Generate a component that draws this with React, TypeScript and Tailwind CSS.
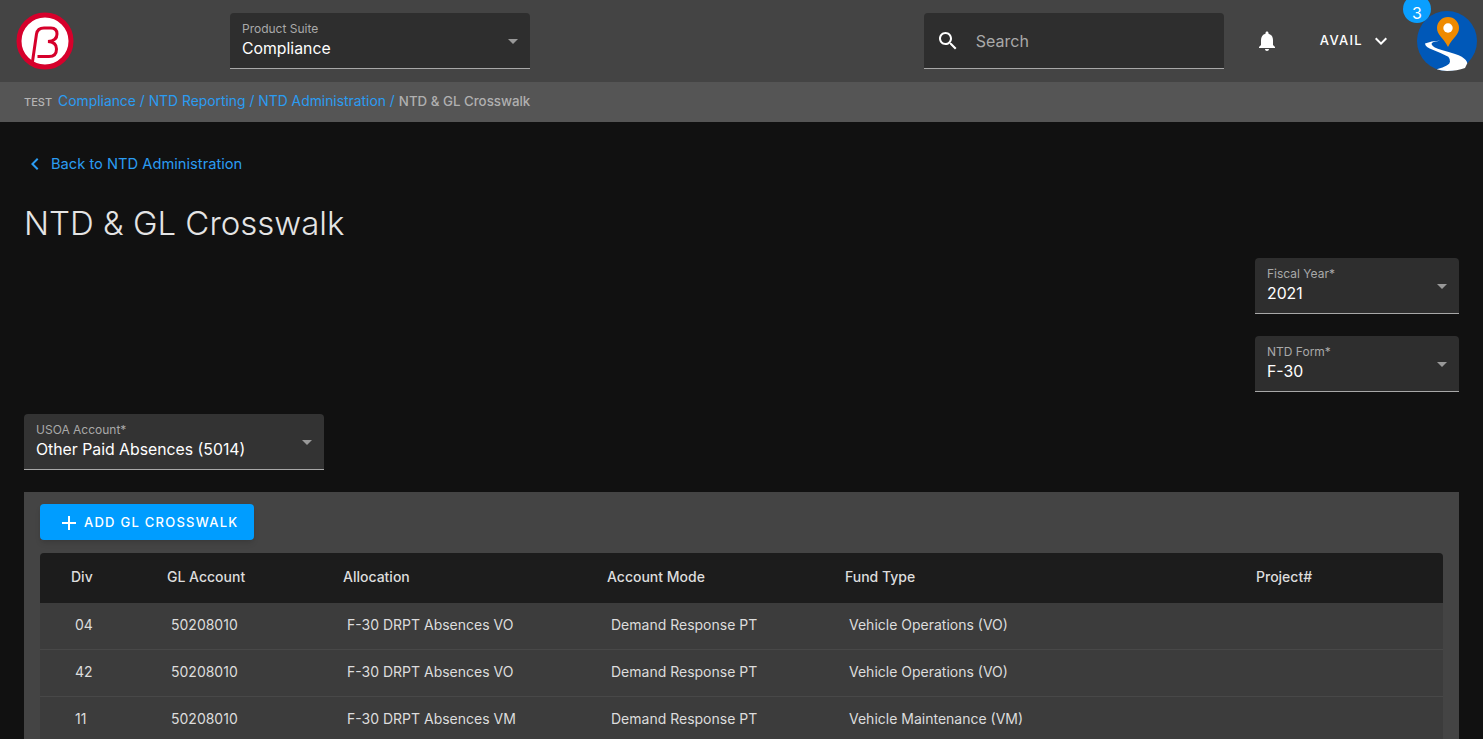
import React from 'react';

const ICON = {
  search: 'M15.5 14h-.79l-.28-.27C15.41 12.59 16 11.11 16 9.5 16 5.91 13.09 3 9.5 3S3 5.91 3 9.5 5.91 16 9.5 16c1.61 0 3.09-.59 4.23-1.57l.27.28v.79l5 4.99L20.49 19l-4.99-5zm-6 0C7.01 14 5 11.99 5 9.5S7.01 5 9.5 5 14 7.01 14 9.5 11.99 14 9.5 14z',
  bell: 'M12 22c1.1 0 2-.9 2-2h-4c0 1.1.89 2 2 2zm6-6v-5c0-3.07-1.64-5.64-4.5-6.32V4c0-.83-.67-1.5-1.5-1.5s-1.5.67-1.5 1.5v.68C7.63 5.36 6 7.92 6 11v5l-2 2v1h16v-1l-2-2z',
  chevronDown: 'M7.41 8.59L12 13.17l4.59-4.58L18 10l-6 6-6-6 1.41-1.41z',
  chevronLeft: 'M15.41 7.41L14 6l-6 6 6 6 1.41-1.41L10.83 12z',
  plus: 'M19 13h-6v6h-2v-6H5v-2h6V5h2v6h6v2z',
  caret: 'M7 10l5 5 5-5z',
};

function Icon({ d, className }: { d: string; className: string }) {
  return (
    <svg viewBox="0 0 24 24" className={className} fill="currentColor">
      <path d={d} />
    </svg>
  );
}

function Logo() {
  return (
    <svg viewBox="0 0 58 58" className="w-[58px] h-[58px]">
      <circle cx="29" cy="29" r="26" fill="#fff" stroke="#d6002b" strokeWidth="5" />
      <path
        d="M16 53 L20.5 22 Q21.5 16 28 16 L35 16 Q41 16 41 22 Q41 29 32 29.5 Q40.5 30 40.5 37 Q40.5 44.5 33 44.5 L21.5 44.5"
        fill="none"
        stroke="#d6002b"
        strokeWidth="3"
      />
    </svg>
  );
}

function Avatar() {
  return (
    <div className="relative w-[60px] h-[60px]">
      <svg viewBox="0 0 60 60" className="w-[60px] h-[60px]">
        <circle cx="30" cy="30" r="30" fill="#0058b8" />
        <path
          d="M8 32.5 Q15 29.5 23 29.7 Q13 31 14.7 33.5 Q16 36.5 24.7 39 Q40 43 44.7 45.7 Q50 49 50.3 52.3 L48 57 Q40 60 30 60 Q25 60 19.7 58.3 Q33 54.5 33 50.7 Q33 47.5 31.3 45.7 Q24 42 16.3 39 Q8 36 8 32.5 Z"
          fill="#fff"
        />
        <path d="M31 36 C26 26 20 24 20 17 A11 11 0 0 1 42 17 C42 24 36 26 31 36 Z" fill="#ee8a00" />
        <circle cx="31" cy="17" r="4.7" fill="#fff" />
      </svg>
      <span className="absolute -top-[16px] -left-[14px] w-[28px] h-[28px] pt-[8px] rounded-full bg-[#0a9fff] text-white text-[16px] flex items-center justify-center">
        3
      </span>
    </div>
  );
}

function Select({ label, value, className }: { label: string; value: string; className: string }) {
  return (
    <div className={`h-[56px] pl-3 pr-[5px] pt-[8px] rounded-t border-b border-[#a8a8a8] flex justify-between ${className}`}>
      <div>
        <div className="text-[12px] leading-[15px] text-[#a9a9a9]">{label}</div>
        <div className="mt-[1px] text-[15.8px] leading-[24px] text-white">{value}</div>
      </div>
      <Icon d={ICON.caret} className="w-6 h-6 mt-[8px] text-[#999999]" />
    </div>
  );
}

const COLS = 'grid grid-cols-[96px_176px_264px_238px_411px_1fr]';

const HEADERS = ['Div', 'GL Account', 'Allocation', 'Account Mode', 'Fund Type', 'Project#'];

const ROWS = [
  ['04', '50208010', 'F-30 DRPT Absences VO', 'Demand Response PT', 'Vehicle Operations (VO)', ''],
  ['42', '50208010', 'F-30 DRPT Absences VO', 'Demand Response PT', 'Vehicle Operations (VO)', ''],
  ['11', '50208010', 'F-30 DRPT Absences VM', 'Demand Response PT', 'Vehicle Maintenance (VM)', ''],
];

export default function App() {
  return (
    <div className="h-[739px] overflow-hidden bg-[#111111] font-[Inter,sans-serif]">
      <header className="h-[82px] bg-[#444444] flex items-center pr-[6px]">
        <div className="w-[230px] pl-[16px]">
          <Logo />
        </div>
        <Select label="Product Suite" value="Compliance" className="w-[300px] bg-[#2e2e2e]" />
        <div className="flex-1" />
        <div className="w-[300px] h-[56px] bg-[#2e2e2e] rounded-t border-b border-[#a8a8a8] flex items-center pl-3">
          <Icon d={ICON.search} className="w-6 h-6 text-white" />
          <span className="ml-[16px] text-[16px] text-[#a9a9a9]">Search</span>
        </div>
        <Icon d={ICON.bell} className="w-6 h-6 text-white ml-[31px]" />
        <div className="ml-[41px] flex items-center text-white text-[13px] font-medium tracking-[1.3px] -mt-[1px]">
          AVAIL
          <Icon d={ICON.chevronDown} className="w-6 h-6 ml-[6px]" />
        </div>
        <div className="ml-[24px] -mt-[1px]">
          <Avatar />
        </div>
      </header>

      <nav className="h-[40px] bg-[#555555] flex items-center pl-6 pb-[1px] whitespace-nowrap">
        <span className="text-[11px] font-medium text-[#b5b5b5] mr-[6px] mt-[2px]">TEST</span>
        <span className="text-[13.87px] text-[#2b9cf2]">Compliance / NTD Reporting / NTD Administration / </span>
        <span className="text-[13.3px] font-medium text-[#b0b0b0] ml-[4px]">NTD &amp; GL Crosswalk</span>
      </nav>

      <main className="px-6">
        <a className="flex items-center h-5 mt-[32px] text-[#2b9cf2] text-[14.7px]">
          <Icon d={ICON.chevronLeft} className="w-6 h-6 mr-[4px] -ml-[1px]" />
          Back to NTD Administration
        </a>
        <h1 className="mt-[27px] h-[44px] leading-[44px] text-[33px] font-light text-[#e4e4e4] whitespace-nowrap">
          NTD &amp; GL Crosswalk
        </h1>

        <div className="mt-[13px] flex flex-col items-end gap-[22px]">
          <Select label="Fiscal Year*" value="2021" className="w-[204px] bg-[#2e2e2e]" />
          <Select label="NTD Form*" value="F-30" className="w-[204px] bg-[#2e2e2e]" />
        </div>

        <Select label="USOA Account*" value="Other Paid Absences (5014)" className="w-[300px] mt-[22px] bg-[#333333]" />

        <section className="mt-[22px] bg-[#444444] px-4 pt-3">
          <button className="w-[214px] h-9 pt-[1px] rounded bg-[#009dff] text-white text-[13px] font-medium tracking-[1.25px] flex items-center pl-[17px] shadow-md whitespace-nowrap">
            <Icon d={ICON.plus} className="w-6 h-6 mr-[3px]" />
            ADD GL CROSSWALK
          </button>

          <div className="mt-[13px] text-[14px] whitespace-nowrap">
            <div className={`${COLS} h-[50px] items-center bg-[#1c1c1c] text-[#dddddd] font-medium pl-[31px] pb-[3px] rounded-t`}>
              {HEADERS.map((h) => (
                <div key={h}>{h}</div>
              ))}
            </div>
            {ROWS.map((row, i) => (
              <div key={i} className={`${COLS} h-[47px] items-center bg-[#3c3c3c] border-b border-[#484848] text-[#dddddd] pl-[35px] pb-[3px]`}>
                {row.map((cell, j) => (
                  <div key={j}>{cell}</div>
                ))}
              </div>
            ))}
          </div>
        </section>
      </main>
    </div>
  );
}
